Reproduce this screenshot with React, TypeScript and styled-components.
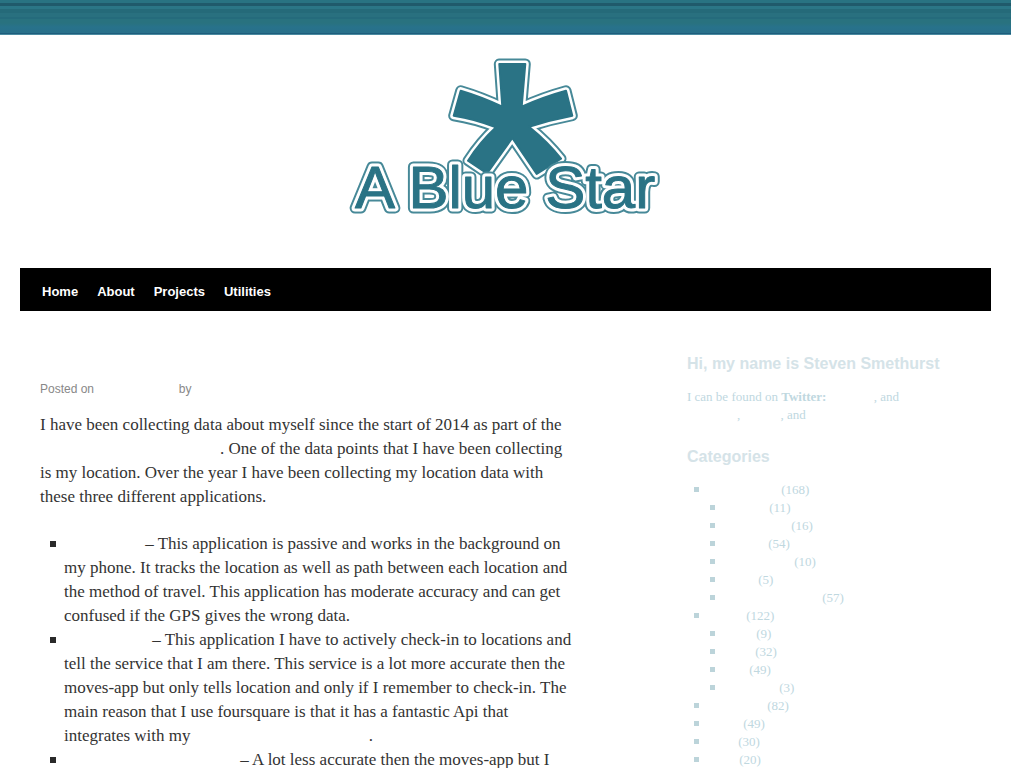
import React from "react";
import styled, { createGlobalStyle } from "styled-components";

const serif = `"Bitstream Charter", Charter, "Liberation Serif", serif`;
const sans = `"Liberation Sans", Arial, sans-serif`;

const GlobalStyle = createGlobalStyle`
  body {
    margin: 0;
    background: #fff;
    color: #333;
    font-family: ${serif};
  }
`;

const Page = styled.div`
  height: 100vh;
  overflow: hidden;
  padding-right: 13px;
`;

const TopBand = styled.div`
  height: 35px;
  background: linear-gradient(
    #297382 0 3px,
    #205a6b 3px 6px,
    #2b7686 6px 9px,
    #256a79 9px 13px,
    #29707f 13px 17px,
    #256b7c 17px 19px,
    #29727f 19px 23px,
    #28728b 27px,
    #28708a 33px,
    #1d5d7c 33px 34px,
    #4a8aa0 34px
  );
`;

const Banner = styled.header`
  padding: 5px 0 38px;
`;

const Logo = styled.svg`
  display: block;
  margin: 0 auto;
`;

const Nav = styled.nav`
  display: flex;
  gap: 19px;
  margin: 0 20px;
  padding: 5px 22px 0;
  background: #000;
`;

const NavLink = styled.a`
  color: #fff;
  font: bold 13px/38px ${sans};
  text-decoration: none;
`;

const Columns = styled.div`
  display: flex;
  justify-content: space-between;
  padding: 0 20px 0 40px;
`;

const Post = styled.article`
  flex: 0 1 536px;
  padding-top: 69px;
  font-size: 17px;
  line-height: 24px;
  white-space: nowrap;
`;

const Meta = styled.div`
  margin-bottom: 15px;
  color: #888;
  font: 12px/18px ${sans};
`;

const Paragraph = styled.p`
  margin: 0 0 23px;
`;

const BulletList = styled.ul<{ $indent: number; $bullet: string; $size: number; $gap: number }>`
  margin: 0;
  padding-left: ${(p) => p.$indent}px;
  list-style: none;

  > li::before {
    content: "";
    display: inline-block;
    width: ${(p) => p.$size}px;
    height: ${(p) => p.$size}px;
    margin: 0 ${(p) => p.$gap}px 2px -${(p) => p.$size + p.$gap}px;
    background: ${(p) => p.$bullet};
  }
`;

const BlankLink = styled.a<{ $width: number }>`
  display: inline-block;
  width: ${(p) => p.$width}px;
  color: #fff;
  text-decoration: none;
`;

const Sidebar = styled.aside`
  flex: 0 0 304px;
  padding-top: 44px;
  color: #c0d8df;
  font-size: 13px;
  line-height: 18px;
  white-space: nowrap;
`;

const WidgetTitle = styled.h3`
  margin: 0 0 15px;
  color: #d5e3e8;
  font: bold 16px/18px ${sans};
`;

const About = styled.p`
  margin: 0 0 24px;
`;

type Category = { name: string; width: number; count: number; children?: Category[] };

const categories: Category[] = [
  {
    name: "Category 1",
    width: 75,
    count: 168,
    children: [
      { name: "Category 1.1", width: 47, count: 11 },
      { name: "Category 1.2", width: 69, count: 16 },
      { name: "Category 1.3", width: 46, count: 54 },
      { name: "Category 1.4", width: 72, count: 10 },
      { name: "Category 1.5", width: 36, count: 5 },
      { name: "Category 1.6", width: 100, count: 57 },
    ],
  },
  {
    name: "Category 2",
    width: 40,
    count: 122,
    children: [
      { name: "Category 2.1", width: 34, count: 9 },
      { name: "Category 2.2", width: 33, count: 32 },
      { name: "Category 2.3", width: 27, count: 49 },
      { name: "Category 2.4", width: 57, count: 3 },
    ],
  },
  { name: "Category 3", width: 61, count: 82 },
  { name: "Category 4", width: 37, count: 49 },
  { name: "Category 5", width: 32, count: 30 },
  { name: "Category 6", width: 33, count: 20 },
];

function Categories({ items }: { items: Category[] }) {
  return (
    <BulletList $indent={16} $bullet="#bcd4da" $size={5} $gap={4}>
      {items.map((c) => (
        <li key={c.name}>
          <BlankLink href="#" aria-label={c.name} $width={c.width} /> ({c.count})
          {c.children && <Categories items={c.children} />}
        </li>
      ))}
    </BulletList>
  );
}

const star =
  "M499.3 64L525.3 64L521.7 106.7Q543 97 566 90.7L572.3 115.7Q550 120 529 126.7Q548 142 561 158.7L536.7 174L512.3 138L487 173.5L468 160.7Q480 142 496 127.3Q475 119 453.7 115.7L460.7 90.7Q482 97 502.3 106.7Z";

function BlueStarLogo() {
  return (
    <Logo width="330" height="190" viewBox="341 40 330 190" role="img" aria-label="A Blue Star">
      <g strokeLinejoin="round">
        <path d={star} fill="none" stroke="#478998" strokeWidth="11" />
        <path d={star} fill="none" stroke="#fff" strokeWidth="7" />
        <path d={star} fill="#2a7385" stroke="#2a7385" strokeWidth="2" />
      </g>
      <g fontFamily="Liberation Sans, Arial, sans-serif" fontSize="60" strokeLinejoin="round">
        <text x="355" y="208" fill="#478998" stroke="#478998" strokeWidth="11">A Blue Star</text>
        <text x="355" y="208" fill="#fff" stroke="#fff" strokeWidth="7">A Blue Star</text>
        <text x="355" y="208" fill="#2a7385" stroke="#2a7385" strokeWidth="1">A Blue Star</text>
      </g>
    </Logo>
  );
}

export default function App() {
  return (
    <>
      <GlobalStyle />
      <Page>
        <TopBand />
        <Banner>
          <BlueStarLogo />
        </Banner>
        <Nav>
          {["Home", "About", "Projects", "Utilities"].map((label) => (
            <NavLink key={label} href="#">{label}</NavLink>
          ))}
        </Nav>
        <Columns>
          <Post>
            <Meta>
              Posted on <BlankLink href="#" aria-label="Post date" $width={78} /> by
            </Meta>
            <Paragraph>
              I have been collecting data about myself since the start of 2014 as part of the
              <br />
              <BlankLink href="#" aria-label="Project" $width={180} />. One of the data points that I have been collecting
              <br />
              is my location. Over the year I have been collecting my location data with
              <br />
              these three different applications.
            </Paragraph>
            <BulletList $indent={24} $bullet="#2a2a2a" $size={6} $gap={8}>
              <li>
                <BlankLink href="#" aria-label="Moves-app" $width={77} /> – This application is passive and works in the background on
                <br />
                my phone. It tracks the location as well as path between each location and
                <br />
                the method of travel. This application has moderate accuracy and can get
                <br />
                confused if the GPS gives the wrong data.
              </li>
              <li>
                <BlankLink href="#" aria-label="Foursquare" $width={84} /> – This application I have to actively check-in to locations and
                <br />
                tell the service that I am there. This service is a lot more accurate then the
                <br />
                moves-app but only tells location and only if I remember to check-in. The
                <br />
                main reason that I use foursquare is that it has a fantastic Api that
                <br />
                integrates with my <BlankLink href="#" aria-label="Integration" $width={174} />.
              </li>
              <li>
                <BlankLink href="#" aria-label="Third application" $width={172} /> – A lot less accurate then the moves-app but I
              </li>
            </BulletList>
          </Post>
          <Sidebar>
            <WidgetTitle>Hi, my name is Steven Smethurst</WidgetTitle>
            <About>
              I can be found on <b>Twitter:</b> <BlankLink href="#" aria-label="Twitter" $width={44} />, and
              <br />
              <BlankLink href="#" aria-label="Profile" $width={50} />, <BlankLink href="#" aria-label="Code" $width={37} />, and
            </About>
            <WidgetTitle>Categories</WidgetTitle>
            <Categories items={categories} />
          </Sidebar>
        </Columns>
      </Page>
    </>
  );
}
